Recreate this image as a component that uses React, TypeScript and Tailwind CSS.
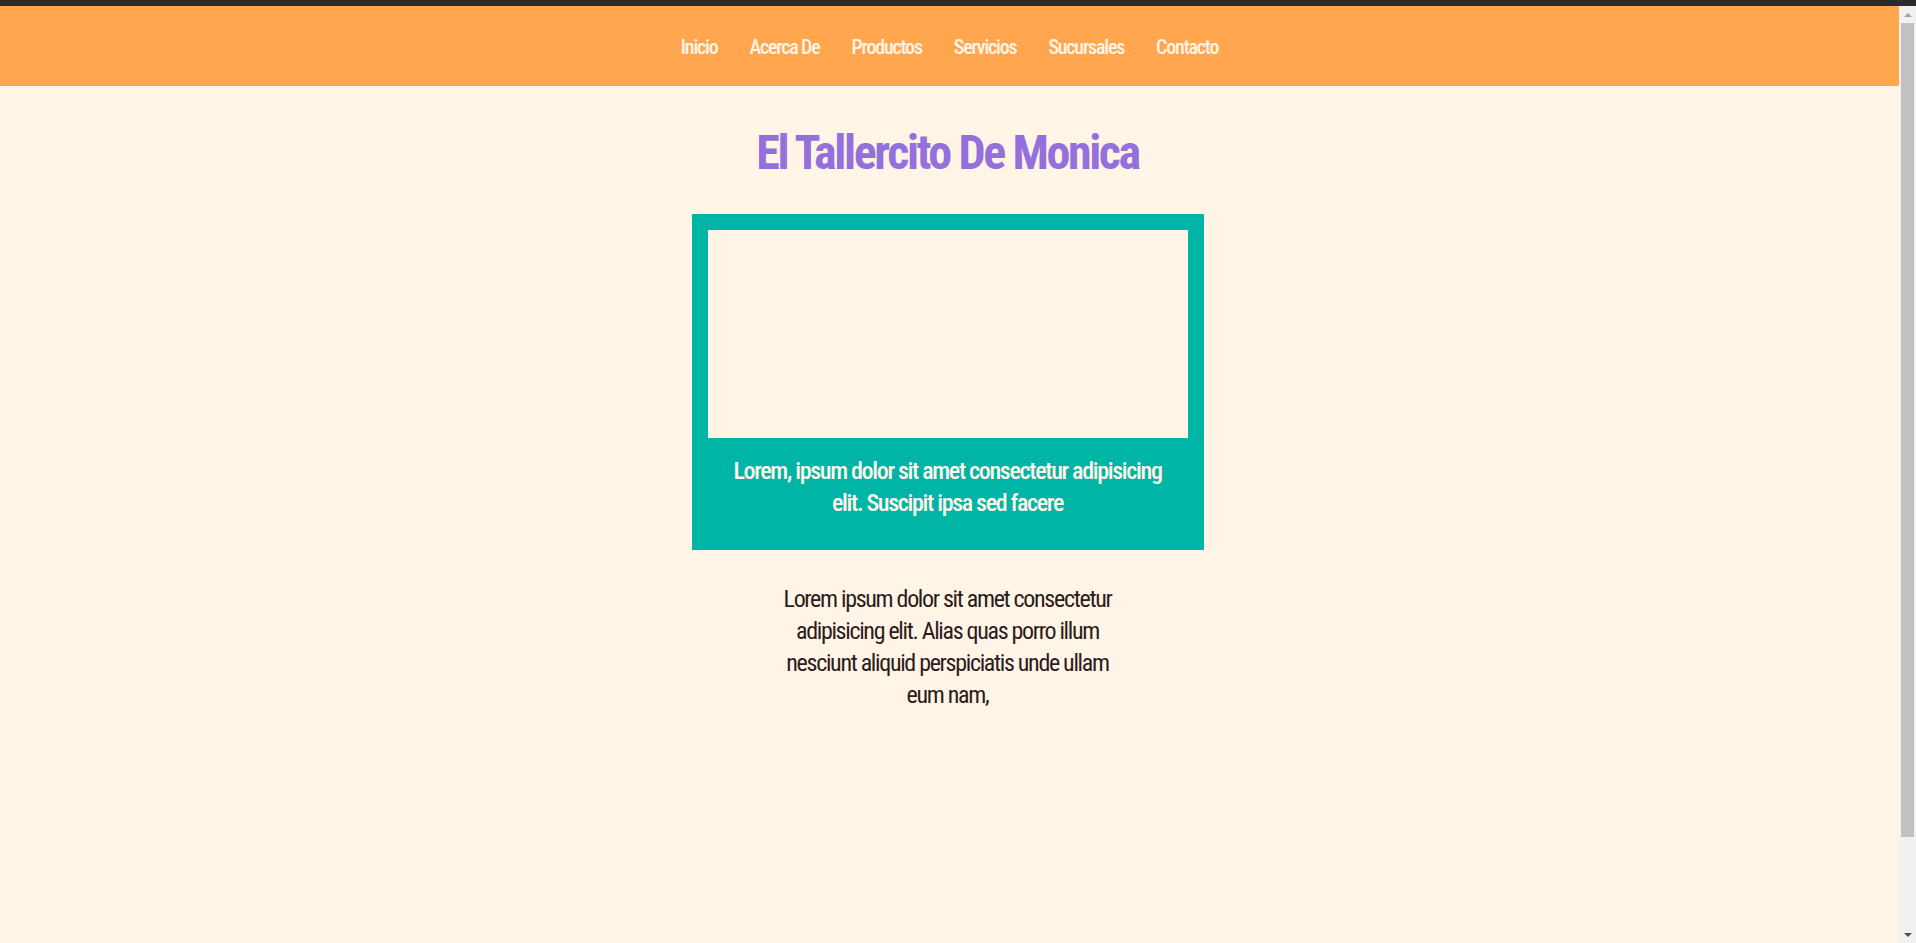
import React from 'react';

const links = ['Inicio', 'Acerca De', 'Productos', 'Servicios', 'Sucursales', 'Contacto'];

function Scrollbar() {
  return (
    <div className="w-[17px] shrink-0 bg-[#f1f1f1] flex flex-col items-center">
      <div className="h-[17px] flex items-center justify-center">
        <div className="w-0 h-0 border-x-[4px] border-x-transparent border-b-[4px] border-b-[#a3a3a3]" />
      </div>
      <div className="w-[13px] h-[814px] bg-[#c1c1c1]" />
      <div className="flex-1" />
      <div className="h-[17px] flex items-center justify-center">
        <div className="w-0 h-0 border-x-[4px] border-x-transparent border-t-[4px] border-t-[#505050]" />
      </div>
    </div>
  );
}

function App() {
  return (
    <div className="h-screen overflow-hidden flex flex-col bg-[#fff5e7] font-['Roboto_Condensed','DejaVu_Sans_Condensed',sans-serif]">
      <div className="h-[6px] shrink-0 bg-[#2b2b2b]" />
      <div className="flex-1 flex min-h-0">
        <div className="flex-1 flex flex-col pr-[4px]">
          <nav className="bg-[#ffa64f] h-[80px] -mr-[4px] flex items-center justify-center pt-[1px]">
            <ul className="flex gap-[32px] text-[20px] font-medium tracking-[-0.06em] text-[#fff5e7]">
              {links.map((l) => (
                <li key={l}>{l}</li>
              ))}
            </ul>
          </nav>
          <main className="flex flex-col items-center">
            <h1 className="mt-[38px] text-[48px] font-bold tracking-[-0.05em] text-[#9370db] leading-[1.2]">
              El Tallercito De Monica
            </h1>
            <div className="mt-[32px] w-[512px] bg-[#00b4a6] px-[16px] pt-[16px] pb-[31px]">
              <div className="h-[208px] bg-[#fff5e7]" />
              <p className="mt-[17px] px-[12px] text-center text-[24px] leading-[32px] font-medium tracking-[-0.055em] text-[#fff5e7]">
                Lorem, ipsum dolor sit amet consectetur adipisicing elit. Suscipit ipsa sed facere
              </p>
            </div>
            <p className="mt-[33px] w-[345px] text-center text-[24px] leading-[32px] tracking-[-0.055em] text-[#2d1b1b]">
              Lorem ipsum dolor sit amet consectetur adipisicing elit. Alias quas porro illum nesciunt aliquid
              perspiciatis unde ullam eum nam,
            </p>
          </main>
        </div>
        <Scrollbar />
      </div>
    </div>
  );
}

export default App;
